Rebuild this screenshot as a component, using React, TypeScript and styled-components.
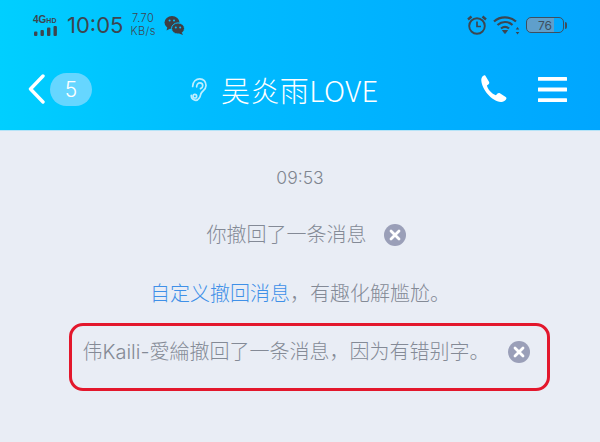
import React from "react";
import styled, { createGlobalStyle } from "styled-components";

const cjk = `"Inter", "Noto Sans CJK SC", sans-serif`;

const GlobalStyle = createGlobalStyle`
  html, body {
    margin: 0;
    padding: 0;
    background: #e9edf5;
  }
  * {
    box-sizing: border-box;
  }
`;

const Page = styled.div`
  width: 600px;
  height: 442px;
  overflow: hidden;
  display: flex;
  flex-direction: column;
  font-family: ${cjk};
  background: #e9edf5;
`;

const Header = styled.header`
  height: 131px;
  flex: none;
  display: flex;
  flex-direction: column;
  background: linear-gradient(90deg, #00cfff 0%, #00bcff 35%, #00a6ff 100%);
  border-bottom: 1px solid #b5e3f7;
`;

const StatusBar = styled.div`
  height: 48px;
  padding: 2px 33px 0 33px;
  display: flex;
  align-items: center;
  justify-content: space-between;
  color: #3f4a55;
`;

const StatusGroup = styled.div`
  display: flex;
  align-items: center;
`;

const Clock = styled.span`
  font-size: 22px;
  line-height: 26px;
  margin-left: 9px;
  color: #3d4650;
`;

const Speed = styled.div`
  display: flex;
  flex-direction: column;
  align-items: center;
  margin-left: 7px;
  font-size: 11px;
  line-height: 13px;
  letter-spacing: 0.4px;
  font-weight: 300;
  color: #3d4650;
`;

const NetBadge = styled.div`
  width: 25px;
  display: flex;
  flex-direction: column;
  gap: 1px;
  font-family: "Liberation Sans", sans-serif;
  font-size: 10px;
  line-height: 9px;
  font-weight: 700;
  color: #3d4650;
  white-space: nowrap;
`;

const SmallHd = styled.span`
  font-size: 7px;
`;

const Battery = styled.div`
  width: 38px;
  height: 16px;
  margin-left: 6px;
  border: 1.5px solid #3d4f60;
  border-radius: 5px;
  display: flex;
  align-items: center;
  justify-content: center;
  background: linear-gradient(90deg, #5f9fcb 76%, transparent 76%);
  font-size: 12px;
  color: #3d4f60;
`;

const BatteryTip = styled.span`
  width: 2px;
  height: 7px;
  margin-left: 1px;
  border-radius: 0 2px 2px 0;
  background: #3d4f60;
`;

const NavBar = styled.div`
  flex: 1;
  padding: 0 33px 0 28px;
  display: flex;
  align-items: center;
  color: #fff;
`;

const Back = styled.div`
  display: flex;
  align-items: center;
  gap: 5px;
`;

const Count = styled.span`
  width: 42px;
  height: 33px;
  border-radius: 17px;
  background: #66d6ff;
  display: flex;
  align-items: center;
  justify-content: center;
  font-size: 21px;
  font-weight: 300;
`;

const Title = styled.div`
  margin-left: 96px;
  display: flex;
  align-items: center;
  gap: 13px;
  white-space: nowrap;
`;

const TitleText = styled.span`
  font-family: "Noto Sans CJK SC", sans-serif;
  font-size: 29px;
  font-weight: 300;
  letter-spacing: 0.4px;
`;

const Actions = styled.div`
  margin-left: auto;
  display: flex;
  align-items: center;
  gap: 31px;
`;

const Chat = styled.main`
  flex: 1;
  display: flex;
  flex-direction: column;
  align-items: center;
  padding-top: 35px;
`;

const Time = styled.div`
  font-size: 17.5px;
  line-height: 24px;
  font-weight: 300;
  color: #7f858f;
`;

const Notice = styled.div<{ $top: number; $shift?: number }>`
  margin-top: ${(p) => p.$top}px;
  margin-left: ${(p) => p.$shift ?? 0}px;
  display: flex;
  align-items: center;
  font-size: 20px;
  line-height: 28px;
  font-weight: 300;
  color: #848a96;
  white-space: nowrap;
`;

const Link = styled.span`
  color: #3f90e8;
`;

const Highlight = styled.div`
  margin-top: 15px;
  margin-left: 18px;
  width: 481px;
  height: 68px;
  padding: 0 0 10px 11px;
  border: 3px solid #e3172c;
  border-radius: 14px;
  display: flex;
  align-items: center;
`;

const Dismiss = styled.span<{ $gap: number }>`
  width: 22px;
  height: 22px;
  margin-left: ${(p) => p.$gap}px;
  border-radius: 50%;
  background: #9a9fb8;
  display: flex;
  align-items: center;
  justify-content: center;
`;

const DismissIcon = () => (
  <svg width="12" height="12" viewBox="0 0 12 12">
    <path d="M2 2l8 8M10 2l-8 8" stroke="#fff" strokeWidth="2.8" strokeLinecap="round" />
  </svg>
);

const Signal = () => (
  <svg width="25" height="10" viewBox="0 0 25 10" fill="#3d4650">
    <rect x="1" y="5.500" width="3.400" height="4.500" rx="1" />
    <rect x="7.500" y="4" width="3.400" height="6" rx="1" />
    <rect x="14" y="1.500" width="3.400" height="8.500" rx="1" />
    <rect x="20.500" y="0" width="3.400" height="10" rx="1" />
  </svg>
);

const WeChat = () => (
  <svg width="21" height="21" viewBox="0 0 21 21" style={{ marginLeft: 8 }}>
    <ellipse cx="8" cy="7.500" rx="7.500" ry="6.500" fill="#3f3f44" />
    <path d="M3.500 11.500l-1 4 4-2z" fill="#3f3f44" />
    <ellipse cx="14" cy="13.500" rx="6.500" ry="5.600" fill="#3f3f44" stroke="#00bfff" strokeWidth="1" />
    <path d="M17.500 17l1.500 3-4-1.600z" fill="#3f3f44" />
    <circle cx="5.600" cy="5.600" r="1" fill="#00bfff" />
    <circle cx="10" cy="5.600" r="1" fill="#00bfff" />
    <circle cx="11.800" cy="12.600" r="1" fill="#00bfff" />
    <circle cx="16.200" cy="12.600" r="1" fill="#00bfff" />
  </svg>
);

const Alarm = () => (
  <svg width="20" height="20" viewBox="0 0 20 20" fill="none" stroke="#3d4650">
    <circle cx="10" cy="11" r="7.800" strokeWidth="1.900" />
    <path d="M10 6.500V11.500H14" strokeWidth="1.700" />
    <path d="M1 4.500L4.500 1.500M19 4.500L15.500 1.500" strokeWidth="2.400" />
  </svg>
);

const Wifi = () => (
  <svg width="27" height="20" viewBox="0 0 27 20" fill="none" stroke="#3d4650" style={{ marginLeft: 6 }}>
    <path d="M1 6.500C7 1 17 1 23 6.500" strokeWidth="2.200" />
    <path d="M4.500 10C9 6 15 6 19.500 10" strokeWidth="2.200" />
    <path d="M8 13.500C10.500 11.500 13.500 11.500 16 13.500" strokeWidth="2.200" />
    <path d="M9.500 15.500h5l-2.500 3z" fill="#3d4650" strokeWidth="1" />
    <path d="M24.500 12l1.800 2.400h-3.600zM24.500 19.500l1.800-2.400h-3.600z" fill="#3d4650" stroke="none" />
  </svg>
);

const Chevron = () => (
  <svg width="17" height="30" viewBox="0 0 17 30" fill="none">
    <path d="M15 2L2.500 15L15 28" stroke="#fff" strokeWidth="3.400" strokeLinecap="round" strokeLinejoin="round" />
  </svg>
);

const Ear = () => (
  <svg width="20" height="25" viewBox="0 0 20 28" fill="none" stroke="#bdeeff" strokeWidth="1.900" strokeLinecap="round">
    <path d="M4 10.500C4 5 8 2 12 2c4 0 7 3.200 7 7.500 0 4-3 5.500-5 8-1.500 2-1.200 4.200-2.600 6C10 25.600 7.500 26.500 5.500 25.500 3.500 24.500 2.400 22.500 2.500 20.500" />
    <path d="M8.500 11c0-2.600 1.600-4.400 3.700-4.400 1.900 0 3.100 1.400 3.100 3.200 0 1.600-1.200 2.600-2.500 3.200" />
    <circle cx="6.500" cy="21.500" r="2" />
  </svg>
);

const Phone = () => (
  <svg width="28" height="28" viewBox="0 0 28 28" fill="#fff">
    <path d="M6.400 0.800 10 6.800c.5.900.3 1.800-.4 2.400L7.900 10.600c.9 3.800 4.900 8.500 9 9.600l1.600-1.700c.7-.7 1.600-.8 2.400-.3l5.800 3.700c.9.600 1 1.700.3 2.500-1.300 1.500-3 2.700-5 2.500C12.500 26.200 3 14.500 2.300 5.500 2.100 3.400 3 1.800 4.300.8 5 .2 5.900.1 6.400.8z" />
  </svg>
);

const MenuIcon = () => (
  <svg width="29" height="25" viewBox="0 0 29 25" fill="#fff">
    <rect x="0" y="0" width="29" height="3.800" rx="0.500" />
    <rect x="0" y="10.600" width="29" height="3.800" rx="0.500" />
    <rect x="0" y="21.200" width="29" height="3.800" rx="0.500" />
  </svg>
);

export default function App() {
  return (
    <Page>
      <GlobalStyle />
      <Header>
        <StatusBar>
          <StatusGroup>
            <NetBadge>
              <span>
                4G<SmallHd>HD</SmallHd>
              </span>
              <Signal />
            </NetBadge>
            <Clock>10:05</Clock>
            <Speed>
              <span>7.70</span>
              <span>KB/s</span>
            </Speed>
            <WeChat />
          </StatusGroup>
          <StatusGroup>
            <Alarm />
            <Wifi />
            <Battery>76</Battery>
            <BatteryTip />
          </StatusGroup>
        </StatusBar>
        <NavBar>
          <Back>
            <Chevron />
            <Count>5</Count>
          </Back>
          <Title>
            <Ear />
            <TitleText>吴炎雨LOVE</TitleText>
          </Title>
          <Actions>
            <Phone />
            <MenuIcon />
          </Actions>
        </NavBar>
      </Header>
      <Chat>
        <Time>09:53</Time>
        <Notice $top={31} $shift={12}>
          你撤回了一条消息
          <Dismiss $gap={17}>
            <DismissIcon />
          </Dismiss>
        </Notice>
        <Notice $top={31}>
          <Link>自定义撤回消息</Link>，有趣化解尴尬。
        </Notice>
        <Highlight>
          <Notice $top={0}>
            伟Kaili-愛綸撤回了一条消息，因为有错别字。
            <Dismiss $gap={19}>
              <DismissIcon />
            </Dismiss>
          </Notice>
        </Highlight>
      </Chat>
    </Page>
  );
}
